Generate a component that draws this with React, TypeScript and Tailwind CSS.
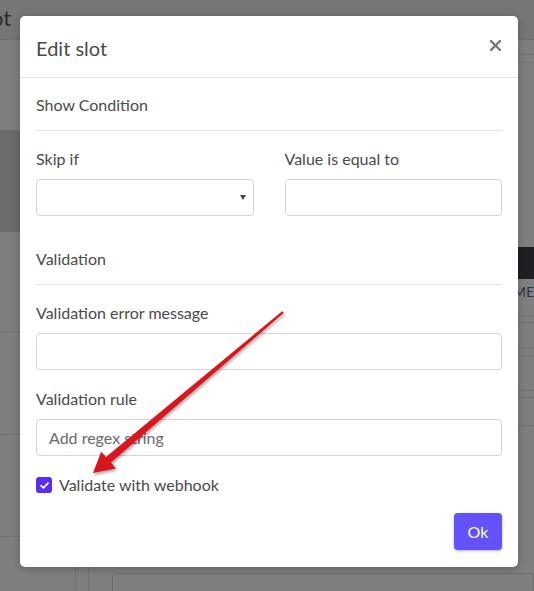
const Field = ({ label, placeholder }: { label: string; placeholder?: string }) => (
  <div className="flex flex-col gap-[9px] mt-[17px]">
    <label className="text-[16px] leading-[22px] text-[#4a4a4a]">{label}</label>
    <input
      type="text"
      placeholder={placeholder}
      className="h-[37px] w-full rounded-[4px] border border-[#d4d4d8] px-3 text-[16px] text-[#4a4a4a] placeholder:text-[#6b6b6b] focus:outline-none"
    />
  </div>
)

const SectionTitle = ({ children }: { children: string }) => (
  <div className="text-[16px] leading-[22px] text-[#4a4a4a] pb-[14px] border-b border-[#e4e4e7]">{children}</div>
)

const Background = () => (
  <div className="flex flex-col">
    <div className="h-[40px] shrink-0 bg-[#767676] border-b border-[#6e6e6e] flex items-center overflow-hidden">
      <span className="text-[22px] leading-[26px] text-[#2e2e2e] -ml-[9px] -mt-[4px]">ot</span>
    </div>
    <div className="flex">
      <div className="w-[77px] border-r border-[#707070] flex flex-col">
        <div className="h-[90px]" />
        <div className="h-[102px] bg-[#6c6c6c]" />
        <div className="h-[100px] border-b border-[#727272]" />
        <div className="h-[103px] border-b border-[#727272]" />
        <div className="h-[102px] border-b border-[#727272]" />
        <div className="h-[60px]" />
      </div>
      <div className="w-[13px] border-r border-[#707070]" />
      <div className="flex-1 flex flex-col">
        <div className="h-[15px] border-b border-[#727272]" />
        <div className="h-[8px] border-b border-[#767676]" />
        <div className="h-[184px]" />
        <div className="h-[32px] bg-[#1f1f23]" />
        <div className="h-[28px] flex items-center pl-[405px] text-[13px] text-[#263040] tracking-wide">NAME</div>
        <div className="h-[10px] border-b border-[#727272]" />
        <div className="h-[6px] border-b border-[#727272]" />
        <div className="h-[26px] border-b border-[#727272]" />
        <div className="h-[8px] border-b border-[#727272]" />
        <div className="h-[34px] border-b border-[#727272]" />
        <div className="h-[7px] border-b border-[#727272]" />
        <div className="h-[28px] border-b border-[#727272]" />
        <div className="h-[116px]" />
        <div className="pl-[23px] text-[16px] leading-[22px] text-[#2e2e2e]">process</div>
        <div className="ml-[23px] mt-[9px] h-[40px] rounded-[4px] border border-[#6c6c6c]" />
      </div>
    </div>
  </div>
)

const Arrow = () => (
  <svg className="absolute left-0 top-0 pointer-events-none" width="534" height="591" viewBox="0 0 534 591">
    <defs>
      <filter id="sh" x="-20%" y="-20%" width="140%" height="140%">
        <feDropShadow dx="1" dy="2" stdDeviation="1.5" floodColor="#000" floodOpacity="0.35" />
      </filter>
    </defs>
    <polygon
      filter="url(#sh)"
      fill="#d9141b"
      points="283.8,312.8 111,462.4 116,468.5 93,473 101.2,451.8 106,457 282.2,311.2"
    />
  </svg>
)

export default function App() {
  return (
    <div
      className="relative w-[534px] h-[591px] overflow-hidden bg-[#7f7f7f]"
      style={{ fontFamily: 'Lato, "Open Sans", sans-serif' }}
    >
      <Background />

      <div className="absolute left-[20px] top-[16px] w-[498px] h-[551px] bg-white rounded-[5px] shadow-[0_2px_8px_rgba(0,0,0,0.25)] flex flex-col">
        <div className="h-[62px] px-4 flex items-center justify-between border-b border-[#e4e4e7]">
          <h1 className="text-[20px] text-[#4a4a4a] pt-[2px]">Edit slot</h1>
          <button className="mr-[1px] -mt-[3px]">
            <svg width="11" height="11" viewBox="0 0 11 11">
              <path d="M1 1L10 10M10 1L1 10" stroke="#7a7a7a" strokeWidth="2.4" strokeLinecap="square" />
            </svg>
          </button>
        </div>

        <div className="px-4 pt-[16px] flex flex-col">
          <SectionTitle>Show Condition</SectionTitle>

          <div className="grid grid-cols-2 gap-[31px]">
            <div className="flex flex-col gap-[9px] mt-[17px]">
              <label className="text-[16px] leading-[22px] text-[#4a4a4a]">Skip if</label>
              <div className="relative h-[37px] rounded-[4px] border border-[#d4d4d8]">
                <svg className="absolute right-[7px] top-[15px]" width="6" height="6" viewBox="0 0 6 6">
                  <path d="M0 0H6L3 5Z" fill="#444" />
                </svg>
              </div>
            </div>
            <Field label="Value is equal to" />
          </div>

          <div className="mt-[32px]">
            <SectionTitle>Validation</SectionTitle>
          </div>

          <Field label="Validation error message" />
          <div className="mt-[1px]">
            <Field label="Validation rule" placeholder="Add regex string" />
          </div>

          <label className="flex items-center gap-[7px] mt-[18px] h-[22px]">
            <span className="w-[16px] h-[16px] rounded-[3px] bg-[#5b2cf6] flex items-center justify-center">
              <svg width="9" height="7" viewBox="0 0 9 7">
                <path d="M1 3.6L3.4 5.8L8 1.2" stroke="#fff" strokeWidth="1.8" fill="none" strokeLinecap="round" strokeLinejoin="round" />
              </svg>
            </span>
            <span className="text-[16px] text-[#4a4a4a]">Validate with webhook</span>
          </label>

          <div className="flex justify-end mt-[17px]">
            <button className="w-[48px] h-[37px] rounded-[4px] bg-[#6352f9] text-white text-[16px] shadow-[0_1px_3px_rgba(0,0,0,0.3)]">
              Ok
            </button>
          </div>
        </div>
      </div>

      <Arrow />
    </div>
  )
}
